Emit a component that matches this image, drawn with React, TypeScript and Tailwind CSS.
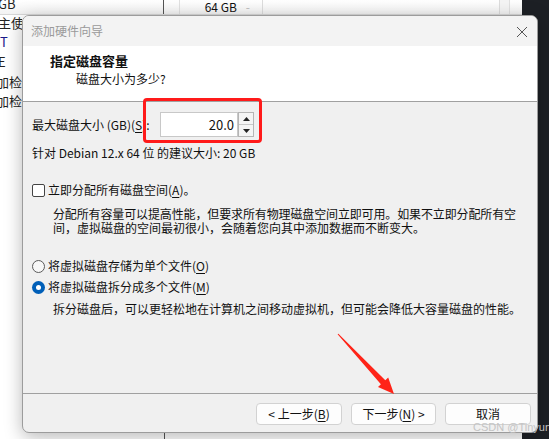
import React from 'react'

const font = "font-['Noto_Sans_CJK_SC','Microsoft_YaHei',sans-serif]"

function Key({ k }: { k: string }) {
  return (
    <>
      (<span className="underline underline-offset-2">{k}</span>)
    </>
  )
}

function Radio({ checked }: { checked?: boolean }) {
  if (checked) {
    return (
      <span className="w-[13px] h-[13px] rounded-full bg-[#005fb8] flex items-center justify-center shrink-0">
        <span className="w-[5px] h-[5px] rounded-full bg-white" />
      </span>
    )
  }
  return <span className="w-[13px] h-[13px] rounded-full border border-[#5a5a5a] bg-[#f7f7f7] shrink-0" />
}

export default function App() {
  return (
    <div className={`relative w-[549px] h-[439px] overflow-hidden bg-[#ededed] text-[12px] text-[#111] ${font}`}>
      {/* window behind the dialog */}
      <div className="absolute left-0 top-0 w-[522px] h-full bg-white">
        <div className="flex h-[15px] border-b border-[#d8d8d8] bg-gradient-to-b from-white to-[#f3f3f3]">
          <div className="w-[164px] border-r border-[#555]" />
          <div className="w-[16px] border-r border-[#e0e0e0]" />
          <div className="w-[83px] border-r border-[#dcdcdc] flex items-center justify-end pr-[12px] text-[12px] leading-[14px] whitespace-nowrap">
            64 GB <span className="ml-[9px] text-[#bbb]">-</span>
          </div>
          <div className="w-[237px] border-r border-[#dcdcdc]" />
          <div className="w-[10px] bg-[#f4f4f4] border-r border-[#e0e0e0]" />
        </div>
        <div className="absolute left-0 top-0 w-[22px] h-[110px] overflow-hidden">
          <div className="ml-[-4px] mt-[-6px] flex flex-col text-[13px] leading-[19px] text-[#222] whitespace-nowrap">
            <span className="ml-[2px]">GB</span>
            <span className="ml-[2px]">主使用</span>
            <span className="ml-[4px] text-[#1a1a8a]">T</span>
            <span className="ml-[2px] mt-[1px]">E</span>
            <span className="mt-[1px]">加检测</span>
            <span>加检测</span>
          </div>
        </div>
        <div className="absolute left-[164px] top-[15px] h-full w-px bg-[#555]" />
      </div>
      <div className="absolute right-0 top-0 w-[27px] h-full bg-[#1d2025]" />

      {/* dialog */}
      <div className="absolute left-[22px] top-[15px] w-[516px] h-[418px] rounded-[7px] border border-[#9c9c9c] bg-[#f0f0f0] shadow-[0_4px_18px_rgba(0,0,0,0.28)] overflow-hidden flex flex-col">
        <div className="h-[30px] bg-[#f3f3f3] flex items-center justify-between pl-[8px] pr-[9px] shrink-0">
          <span className="text-[#9a9a9a] text-[12px]">添加硬件向导</span>
          <svg width="12" height="12" viewBox="0 0 12 12" className="mt-[1px]">
            <path d="M1 1L11 11M11 1L1 11" stroke="#555" strokeWidth="1" />
          </svg>
        </div>
        <div className="h-[56px] bg-white border-b border-[#a0a0a0] pt-[7px] shrink-0">
          <div className="pl-[27px] font-bold text-[13px] leading-[16px]">指定磁盘容量</div>
          <div className="pl-[53px] mt-[3px] leading-[14px]">磁盘大小为多少?</div>
        </div>
        <div className="flex-1 pl-[9px] pt-[10px] leading-[14px]">
          <div className="flex items-center h-[25px]">
            <span className="w-[128px] whitespace-nowrap">
              最大磁盘大小 (GB)<Key k="S" />:
            </span>
            <div className="w-[78px] h-[25px] bg-white border border-[#c8c8c8] flex items-center justify-end pr-[3px] text-[13px]">
              20.0
            </div>
            <div className="w-[16px] h-[25px] flex flex-col border border-[#b5b5b5] bg-[#f4f4f4]">
              <div className="flex-1 flex items-center justify-center border-b border-[#c8c8c8]">
                <svg width="7" height="4" viewBox="0 0 7 4"><path d="M3.5 0L7 4H0z" fill="#222" /></svg>
              </div>
              <div className="flex-1 flex items-center justify-center">
                <svg width="7" height="4" viewBox="0 0 7 4"><path d="M0 0H7L3.5 4z" fill="#222" /></svg>
              </div>
            </div>
          </div>
          <div className="mt-[9px] h-[14px]">针对 Debian 12.x 64 位 的建议大小: 20 GB</div>

          <div className="mt-[23px] h-[14px] flex items-center gap-[3px]">
            <span className="w-[13px] h-[13px] border border-[#444] rounded-[2px] bg-white" />
            <span>
              立即分配所有磁盘空间<Key k="A" />。
            </span>
          </div>
          <div className="mt-[10px] pl-[21px] whitespace-nowrap leading-[14px]">
            <div className="h-[14px] tracking-[-0.13px]">分配所有容量可以提高性能，但要求所有物理磁盘空间立即可用。如果不立即分配所有空</div>
            <div className="h-[14px]">间，虚拟磁盘的空间最初很小，会随着您向其中添加数据而不断变大。</div>
          </div>

          <div className="mt-[24px] h-[14px] flex items-center gap-[3px]">
            <Radio />
            <span>
              将虚拟磁盘存储为单个文件<Key k="O" />
            </span>
          </div>
          <div className="mt-[7px] h-[14px] flex items-center gap-[3px]">
            <Radio checked />
            <span>
              将虚拟磁盘拆分成多个文件<Key k="M" />
            </span>
          </div>
          <div className="mt-[8px] pl-[21px] whitespace-nowrap">拆分磁盘后，可以更轻松地在计算机之间移动虚拟机，但可能会降低大容量磁盘的性能。</div>
        </div>
        <div className="h-[39px] border-t border-[#a0a0a0] flex items-start justify-end gap-[9px] pt-[9px] pr-[6px] shrink-0">
          <button className="w-[86px] h-[22px] rounded-[4px] border border-[#d2d2d2] bg-[#fdfdfd] flex items-center justify-center">
            &lt; 上一步<Key k="B" />
          </button>
          <button className="w-[85px] h-[22px] rounded-[4px] border border-[#d2d2d2] bg-[#fdfdfd] flex items-center justify-center">
            下一步<Key k="N" /> &gt;
          </button>
          <button className="w-[86px] h-[22px] rounded-[4px] border border-[#d2d2d2] bg-[#fdfdfd] flex items-center justify-center">
            取消
          </button>
        </div>
      </div>

      {/* annotations */}
      <div className="absolute left-[143px] top-[98px] w-[119px] h-[45px] border-[3px] border-[#ff1a1a] rounded-[4px]" />
      <svg className="absolute left-0 top-0" width="549" height="439" viewBox="0 0 549 439">
        <polygon
          points="338.4,333.7 385.3,380.3 388.2,377.5 394,394 378,387.1 380.9,384.3 337.6,334.3"
          fill="#ff2418"
        />
      </svg>
      <div className="absolute left-[473px] top-[420px] text-[11px] leading-[14px] text-[#c4c4c4] font-['Liberation_Sans',sans-serif] whitespace-nowrap">
        CSDN @Tinyundg
      </div>
    </div>
  )
}
